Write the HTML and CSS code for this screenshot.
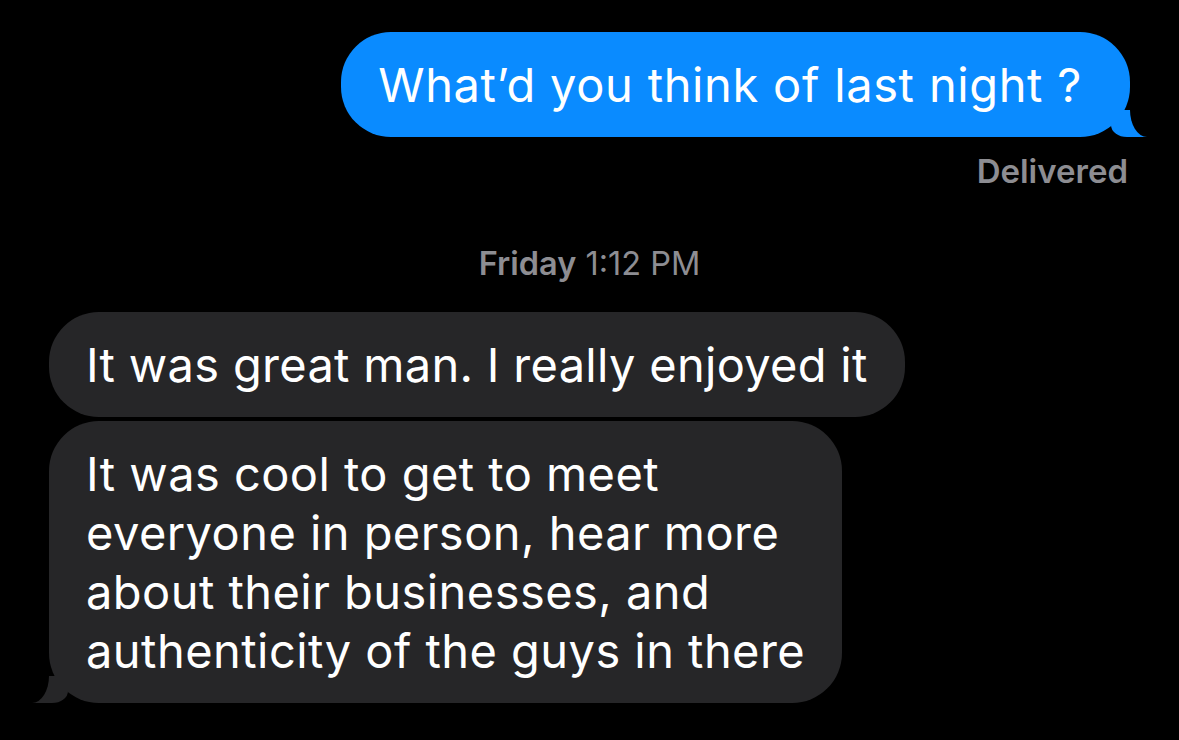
FILE: index.html
```html
<!DOCTYPE html>
<html lang="en">
<head>
<meta charset="utf-8">
<title>Messages</title>
<link rel="stylesheet" href="styles.css">
</head>
<body>
<main class="thread">
  <div class="row sent">
    <div class="bubble blue">What’d you think of last night ?</div>
  </div>
  <div class="status">Delivered</div>
  <div class="stamp"><span class="day">Friday</span> 1:12 PM</div>
  <div class="row received">
    <div class="bubble gray">It was great man. I really enjoyed it</div>
  </div>
  <div class="row received last">
    <div class="bubble gray tail">It was cool to get to meet<br>everyone in person, hear more<br>about their businesses, and<br>authenticity of the guys in there</div>
  </div>
</main>
</body>
</html>
```
FILE: styles.css
```css
:root {
  --blue: #0a8bff;
  --gray: #262628;
  --muted: #8d8d92;
}
html, body {
  margin: 0;
  padding: 0;
  background: #000;
}
body {
  width: 1179px;
  height: 740px;
  overflow: hidden;
  font-family: Inter, "Liberation Sans", sans-serif;
  color: #fff;
}
.thread {
  display: flex;
  flex-direction: column;
  padding-top: 32px;
}
.row {
  display: flex;
}
.row.sent {
  justify-content: flex-end;
  padding-right: 49px;
}
.row.received {
  justify-content: flex-start;
  padding-left: 49px;
  margin-top: 4px;
}
.bubble {
  position: relative;
  font-size: 47px;
  line-height: 59px;
  letter-spacing: 0.3px;
  padding: 23px 37px;
  border-radius: 50px;
  white-space: nowrap;
}
.bubble.blue {
  background: var(--blue);
  letter-spacing: 0.6px;
  word-spacing: 0.5px;
  padding-right: 48px;
}
.bubble.blue::before {
  content: "";
  position: absolute;
  right: -17px;
  bottom: 0;
  width: 36px;
  height: 27px;
  background: var(--blue);
  border-bottom-left-radius: 16px 12px;
}
.bubble.blue::after {
  content: "";
  position: absolute;
  left: 100%;
  bottom: 0;
  width: 30px;
  height: 27px;
  background: #000;
  border-bottom-left-radius: 17px 27px;
}
.bubble.gray {
  background: var(--gray);
}
.bubble.gray.tail {
  letter-spacing: 0.45px;
}
.bubble.gray.tail::before {
  content: "";
  position: absolute;
  left: -17px;
  bottom: 0;
  width: 36px;
  height: 27px;
  background: var(--gray);
  border-bottom-right-radius: 16px 12px;
}
.bubble.gray.tail::after {
  content: "";
  position: absolute;
  right: 100%;
  bottom: 0;
  width: 30px;
  height: 27px;
  background: #000;
  border-bottom-right-radius: 17px 27px;
}
.status {
  align-self: flex-end;
  margin-top: 14px;
  padding-right: 51px;
  font-size: 33px;
  line-height: 40px;
  font-weight: 600;
  color: var(--muted);
}
.stamp {
  align-self: center;
  margin-top: 53px;
  margin-bottom: 24px;
  font-size: 32.5px;
  line-height: 40px;
  color: var(--muted);
}
.stamp .day {
  font-weight: 600;
}
```
